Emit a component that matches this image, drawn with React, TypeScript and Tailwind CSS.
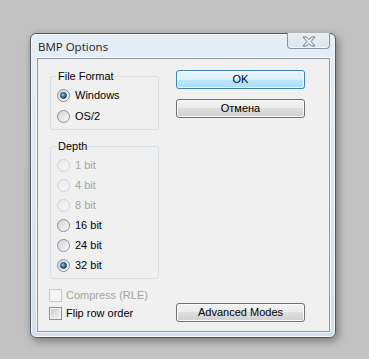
import clsx from 'clsx'

function Radio({ label, checked, disabled }: { label: string; checked?: boolean; disabled?: boolean }) {
  return (
    <div className="flex h-[20px] items-center">
      <span
        className={clsx(
          'flex h-[13px] w-[13px] items-center justify-center rounded-full border',
          disabled
            ? 'border-[#cfd1d3] bg-gradient-to-br from-[#e6e7e8] to-[#f8f8f8]'
            : 'border-[#8c8e90] bg-gradient-to-br from-[#cfd1d4] to-[#fbfbfb]'
        )}
      >
        {checked && (
          <span className="h-[7px] w-[7px] rounded-full border border-[#173b5c] bg-[radial-gradient(circle_at_35%_30%,#9ad8f7_0%,#2d7db5_45%,#0f3c66_100%)]" />
        )}
      </span>
      <span className={clsx('ml-[5px]', disabled ? 'text-[#a3a3a3]' : 'text-black')}>{label}</span>
    </div>
  )
}

function Check({ label, disabled }: { label: string; disabled?: boolean }) {
  return (
    <div className="flex h-[18px] items-center">
      <span
        className={clsx(
          'flex h-[13px] w-[13px] items-center justify-center border',
          disabled ? 'border-[#cacaca] bg-[#f4f4f4]' : 'border-[#8c8e90] bg-[#f4f4f4]'
        )}
      >
        {!disabled && <span className="h-[9px] w-[9px] bg-gradient-to-br from-[#c6cad0] to-[#f3f4f5]" />}
      </span>
      <span className={clsx('ml-[4px]', disabled ? 'text-[#a3a3a3]' : 'text-black')}>{label}</span>
    </div>
  )
}

function WinButton({ children, primary, className }: { children: string; primary?: boolean; className?: string }) {
  return (
    <button
      className={clsx(
        'flex h-[19px] w-[129px] items-center justify-center rounded-[3px] border text-black shadow-[inset_0_0_0_1px_#fcfcfc]',
        primary
          ? 'border-[#3c7fb1] bg-[linear-gradient(to_bottom,#eaf6fd_0%,#d9f0fc_50%,#bee6fd_50%,#a9dbf6_100%)]'
          : 'border-[#707070] bg-[linear-gradient(to_bottom,#f2f2f2_0%,#ebebeb_50%,#dddddd_50%,#cfcfcf_100%)]',
        className
      )}
    >
      {children}
    </button>
  )
}

export default function App() {
  return (
    <div className="h-[359px] w-[369px] bg-[#c2c2c2] pl-[30px] pt-[33px] font-['Liberation_Sans',Arial,sans-serif] text-[11px] leading-[13px]">
      <div className="flex h-[305px] w-[306px] flex-col rounded-[6px] border border-[#4f5a66] bg-gradient-to-b from-[#e6edf5] to-[#d5e0ea] pb-[5px] pl-[6px] pr-[5px] shadow-[inset_0_0_0_1px_rgba(255,255,255,0.7),2px_3px_9px_rgba(0,0,0,0.4)]">
        <div className="flex h-[26px] items-start justify-between">
          <span className="pl-[1px] pt-[5px] font-['Open_Sans',sans-serif] text-[11.5px] leading-[16px] text-[#1a1a1a]">
            BMP Options
          </span>
          <div className="-mt-px flex h-[16px] w-[43px] items-center justify-center rounded-b-[4px] border border-t-0 border-[#8794a2] bg-gradient-to-b from-[#e9eef3] to-[#dce4ec] shadow-[inset_0_-1px_0_#f5f8fb]">
            <svg width="14" height="11" viewBox="0 0 14 11" className="mt-[1px]">
              <polygon
                points="1,1 4.5,1 7,3.6 9.5,1 13,1 9,5.5 13,10 9.5,10 7,7.4 4.5,10 1,10 5,5.5"
                fill="#eef1f4"
                stroke="#6d7a87"
                strokeWidth="1"
                strokeLinejoin="round"
              />
            </svg>
          </div>
        </div>

        <div className="flex flex-1 border border-[#8b99a9] bg-[#f0f0f0] pb-[9px] pl-[11px] pt-[11px] shadow-[0_0_0_1px_#f4f7fa]">
          <div className="flex w-[110px] flex-col">
            <fieldset className="ml-[1px] rounded-[3px] border border-[#d5dfe5] pb-[2px] pl-[6px] pt-[2px]">
              <legend className="px-[1px]">File Format</legend>
              <div className="[&>div]:h-[21px]">
                <Radio label="Windows" checked />
                <Radio label="OS/2" />
              </div>
            </fieldset>

            <fieldset className="ml-[1px] mt-[10px] rounded-[3px] border border-[#d5dfe5] pb-[3px] pl-[6px] pt-[2px]">
              <legend className="px-[1px]">Depth</legend>
              <Radio label="1 bit" disabled />
              <Radio label="4 bit" disabled />
              <Radio label="8 bit" disabled />
              <Radio label="16 bit" />
              <Radio label="24 bit" />
              <Radio label="32 bit" checked />
            </fieldset>

            <div className="mt-[7px]">
              <Check label="Compress (RLE)" disabled />
              <Check label="Flip row order" />
            </div>
          </div>

          <div className="ml-[17px] flex flex-col">
            <WinButton primary>OK</WinButton>
            <WinButton className="mt-[10px]">Отмена</WinButton>
            <WinButton className="mt-auto">Advanced Modes</WinButton>
          </div>
        </div>
      </div>
    </div>
  )
}
